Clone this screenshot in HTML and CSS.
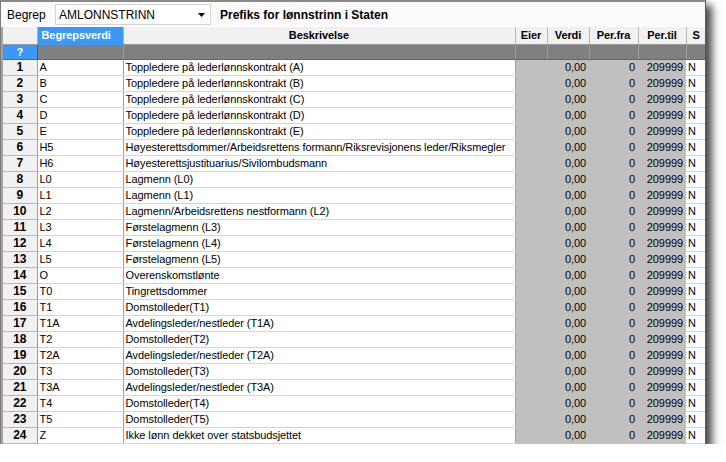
FILE: index.html
```html
<!DOCTYPE html>
<html>
<head>
<meta charset="utf-8">
<link rel="stylesheet" href="styles.css">
</head>
<body>
<div class="window">
  <div class="toolbar">
    <span class="label">Begrep</span>
    <div class="combo">
      <span>AMLONNSTRINN</span>
      <svg class="arrow" width="7" height="4" viewBox="0 0 7 4"><path d="M0 0h7L3.5 4z" fill="#000"/></svg>
    </div>
    <span class="title">Prefiks for lønnstrinn i Staten</span>
  </div>
  <div class="gridwrap">
  <table class="grid">
    <colgroup>
      <col class="c-rh"><col class="c-bv"><col class="c-be"><col class="c-ei"><col class="c-ve"><col class="c-pf"><col class="c-pt"><col class="c-s">
    </colgroup>
    <thead>
      <tr class="hdr">
        <th class="corner"></th>
        <th class="sel">Begrepsverdi</th>
        <th>Beskrivelse</th>
        <th>Eier</th>
        <th>Verdi</th>
        <th>Per.fra</th>
        <th>Per.til</th>
        <th>S</th>
      </tr>
      <tr class="filter">
        <th class="q">?</th>
        <td class="fb"></td><td></td><td></td><td></td><td></td><td></td><td></td>
      </tr>
    </thead>
    <tbody>
      <tr><th>1</th><td>A</td><td>Toppledere på lederlønnskontrakt (A)</td><td class="g"></td><td class="g r">0,00</td><td class="g r">0</td><td class="g r">209999</td><td class="s">N</td></tr>
      <tr><th>2</th><td>B</td><td>Toppledere på lederlønnskontrakt (B)</td><td class="g"></td><td class="g r">0,00</td><td class="g r">0</td><td class="g r">209999</td><td class="s">N</td></tr>
      <tr><th>3</th><td>C</td><td>Toppledere på lederlønnskontrakt (C)</td><td class="g"></td><td class="g r">0,00</td><td class="g r">0</td><td class="g r">209999</td><td class="s">N</td></tr>
      <tr><th>4</th><td>D</td><td>Toppledere på lederlønnskontrakt (D)</td><td class="g"></td><td class="g r">0,00</td><td class="g r">0</td><td class="g r">209999</td><td class="s">N</td></tr>
      <tr><th>5</th><td>E</td><td>Toppledere på lederlønnskontrakt (E)</td><td class="g"></td><td class="g r">0,00</td><td class="g r">0</td><td class="g r">209999</td><td class="s">N</td></tr>
      <tr><th>6</th><td>H5</td><td>Høyesterettsdommer/Arbeidsrettens formann/Riksrevisjonens leder/Riksmegler</td><td class="g"></td><td class="g r">0,00</td><td class="g r">0</td><td class="g r">209999</td><td class="s">N</td></tr>
      <tr><th>7</th><td>H6</td><td>Høyesterettsjustituarius/Sivilombudsmann</td><td class="g"></td><td class="g r">0,00</td><td class="g r">0</td><td class="g r">209999</td><td class="s">N</td></tr>
      <tr><th>8</th><td>L0</td><td>Lagmenn (L0)</td><td class="g"></td><td class="g r">0,00</td><td class="g r">0</td><td class="g r">209999</td><td class="s">N</td></tr>
      <tr><th>9</th><td>L1</td><td>Lagmenn (L1)</td><td class="g"></td><td class="g r">0,00</td><td class="g r">0</td><td class="g r">209999</td><td class="s">N</td></tr>
      <tr><th>10</th><td>L2</td><td>Lagmenn/Arbeidsrettens nestformann (L2)</td><td class="g"></td><td class="g r">0,00</td><td class="g r">0</td><td class="g r">209999</td><td class="s">N</td></tr>
      <tr><th>11</th><td>L3</td><td>Førstelagmenn (L3)</td><td class="g"></td><td class="g r">0,00</td><td class="g r">0</td><td class="g r">209999</td><td class="s">N</td></tr>
      <tr><th>12</th><td>L4</td><td>Førstelagmenn (L4)</td><td class="g"></td><td class="g r">0,00</td><td class="g r">0</td><td class="g r">209999</td><td class="s">N</td></tr>
      <tr><th>13</th><td>L5</td><td>Førstelagmenn (L5)</td><td class="g"></td><td class="g r">0,00</td><td class="g r">0</td><td class="g r">209999</td><td class="s">N</td></tr>
      <tr><th>14</th><td>O</td><td>Overenskomstlønte</td><td class="g"></td><td class="g r">0,00</td><td class="g r">0</td><td class="g r">209999</td><td class="s">N</td></tr>
      <tr><th>15</th><td>T0</td><td>Tingrettsdommer</td><td class="g"></td><td class="g r">0,00</td><td class="g r">0</td><td class="g r">209999</td><td class="s">N</td></tr>
      <tr><th>16</th><td>T1</td><td>Domstolleder(T1)</td><td class="g"></td><td class="g r">0,00</td><td class="g r">0</td><td class="g r">209999</td><td class="s">N</td></tr>
      <tr><th>17</th><td>T1A</td><td>Avdelingsleder/nestleder (T1A)</td><td class="g"></td><td class="g r">0,00</td><td class="g r">0</td><td class="g r">209999</td><td class="s">N</td></tr>
      <tr><th>18</th><td>T2</td><td>Domstolleder(T2)</td><td class="g"></td><td class="g r">0,00</td><td class="g r">0</td><td class="g r">209999</td><td class="s">N</td></tr>
      <tr><th>19</th><td>T2A</td><td>Avdelingsleder/nestleder (T2A)</td><td class="g"></td><td class="g r">0,00</td><td class="g r">0</td><td class="g r">209999</td><td class="s">N</td></tr>
      <tr><th>20</th><td>T3</td><td>Domstolleder(T3)</td><td class="g"></td><td class="g r">0,00</td><td class="g r">0</td><td class="g r">209999</td><td class="s">N</td></tr>
      <tr><th>21</th><td>T3A</td><td>Avdelingsleder/nestleder (T3A)</td><td class="g"></td><td class="g r">0,00</td><td class="g r">0</td><td class="g r">209999</td><td class="s">N</td></tr>
      <tr><th>22</th><td>T4</td><td>Domstolleder(T4)</td><td class="g"></td><td class="g r">0,00</td><td class="g r">0</td><td class="g r">209999</td><td class="s">N</td></tr>
      <tr><th>23</th><td>T5</td><td>Domstolleder(T5)</td><td class="g"></td><td class="g r">0,00</td><td class="g r">0</td><td class="g r">209999</td><td class="s">N</td></tr>
      <tr><th>24</th><td>Z</td><td>Ikke lønn dekket over statsbudsjettet</td><td class="g"></td><td class="g r">0,00</td><td class="g r">0</td><td class="g r">209999</td><td class="s">N</td></tr>
    </tbody>
  </table>
  </div>
</div>
</body>
</html>
```

FILE: styles.css
```css
html, body {
  margin: 0;
  padding: 0;
  background: #ffffff;
}
body {
  font-family: "Liberation Sans", Arial, sans-serif;
  font-size: 11px;
  color: #000;
}
.window {
  width: 706px;
  height: 444px;
  border-top: 2px solid #8a8a8a;
  border-left: 1px solid #7a7a7a;
  border-right: 1px solid #5a5a5a;
  box-sizing: border-box;
  box-shadow: 5px 6px 8px 1px rgba(0,0,0,0.72);
  background: #f9f9f9;
  overflow: hidden;
}
.toolbar {
  height: 25px;
  display: flex;
  align-items: center;
  padding-left: 6px;
  box-sizing: border-box;
  background: #fbfbfb;
}
.label {
  font-size: 12px;
  width: 48px;
}
.combo {
  width: 156px;
  height: 21px;
  box-sizing: border-box;
  border: 1px solid #d5d5d5;
  background: #fff;
  display: flex;
  align-items: center;
  justify-content: space-between;
  padding: 0 5px 0 3px;
  font-size: 12px;
}
.arrow {
  margin-top: 1px;
}
.title {
  margin-left: 9px;
  font-size: 12px;
  font-weight: bold;
}
.gridwrap {
  border-left: 2px solid #a3a3a3;
  background: #f1f1f1;
}
.grid {
  border-collapse: collapse;
  table-layout: fixed;
  width: 703px;
  letter-spacing: -0.08px;
}
.c-rh { width: 34px; }
.c-bv { width: 86px; }
.c-be { width: 392px; }
.c-ei { width: 32px; }
.c-ve { width: 42px; }
.c-pf { width: 49px; }
.c-pt { width: 48px; }
.c-s  { width: 20px; }
.grid th, .grid td {
  padding: 0 2px;
  white-space: nowrap;
  overflow: hidden;
  line-height: 15px;
  height: 15px;
}
tbody th, tbody td {
  padding-top: 1px;
  height: 14px;
}
.hdr th {
  height: 17px;
  line-height: 17px;
  background: #f1f1f1;
  font-weight: bold;
  text-align: center;
  border-right: 1px solid #b4b4b4;
  border-bottom: 1px solid #9a9a9a;
  font-size: 11px;
  vertical-align: middle;
}
.hdr th.sel {
  background: #3b98f7;
  color: #fff;
  text-align: left;
  padding-left: 4px;
  border-bottom: 1px solid #3b98f7;
}
.hdr th:last-child { border-right: none; }
.filter th, .filter td {
  height: 14px;
  line-height: 14px;
  background: #808080;
  border-right: 1px solid #9c9c9c;
  border-bottom: 1px solid #666;
}
.filter td.fb { border-left: 1px solid #555; }
.filter th.q {
  background: #3b98f7;
  color: #fff;
  font-weight: bold;
  text-align: center;
  border-right: 1px solid #555;
}
tbody th {
  background: #f1f1f1;
  font-weight: bold;
  font-size: 12px;
  text-align: center;
  border-right: 1px solid #9a9a9a;
  border-bottom: 1px solid #b8b8b8;
}
tbody td {
  background: #fff;
  border-right: 1px solid #a0a0a0;
  border-bottom: 1px solid #d6d6d6;
  padding-left: 1px;
}
tbody td.g {
  background: #c0c0c0;
  border-right: none;
  border-bottom: 1px solid #c0c0c0;
}
tbody td.r { text-align: right; padding-right: 3px; }
tbody td.s {
  padding-left: 2px;
  border-right: none;
}
```
